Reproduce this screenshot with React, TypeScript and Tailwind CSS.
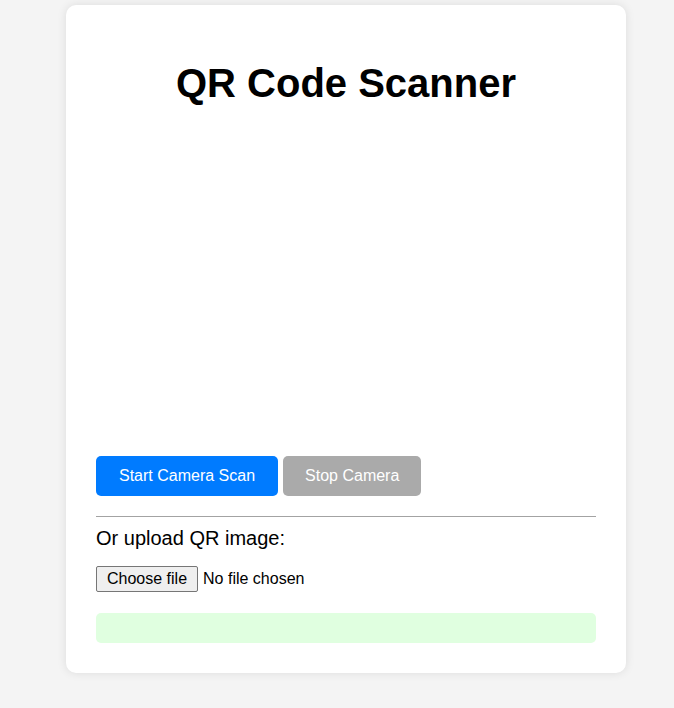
export default function App() {
  return (
    <div
      className="min-h-screen bg-[#f4f4f4] pt-[5px] pb-[35px] pl-[18px] flex justify-center"
      style={{ fontFamily: '"Liberation Sans", Arial, sans-serif' }}
    >
      <div className="w-[560px] bg-white rounded-[10px] shadow-[0_0_10px_rgba(0,0,0,0.1)] px-[30px] pt-[30px] pb-[30px] h-fit">
        <h1 className="mt-[25px] text-[40px] leading-[46px] font-bold text-black text-center">
          QR Code Scanner
        </h1>

        {/* camera preview area */}
        <div className="h-[350px] w-full" />

        <div className="flex gap-[5px]">
          <button className="h-[40px] px-[23px] bg-[#007bff] text-white text-[16px] rounded-[5px]">
            Start Camera Scan
          </button>
          <button className="h-[40px] px-[22px] bg-[#aaaaaa] text-white text-[16px] rounded-[5px]">
            Stop Camera
          </button>
        </div>

        <hr className="mt-[20px] border-0 border-t border-[#a3a3a3]" />

        <p className="mt-[10px] text-[20px] leading-[23px] text-black">Or upload QR image:</p>

        <div className="mt-[16px] h-[26px] flex items-center gap-[5px] text-[16px] text-black">
          <label className="h-[26px] px-[10px] flex items-center bg-[#efefef] border border-[#767676] rounded-[2px] cursor-default">
            Choose file
            <input type="file" accept="image/*" className="hidden" />
          </label>
          <span>No file chosen</span>
        </div>

        <div className="mt-[21px] h-[30px] bg-[#e0ffe0] rounded-[5px]" />
      </div>
    </div>
  );
}
